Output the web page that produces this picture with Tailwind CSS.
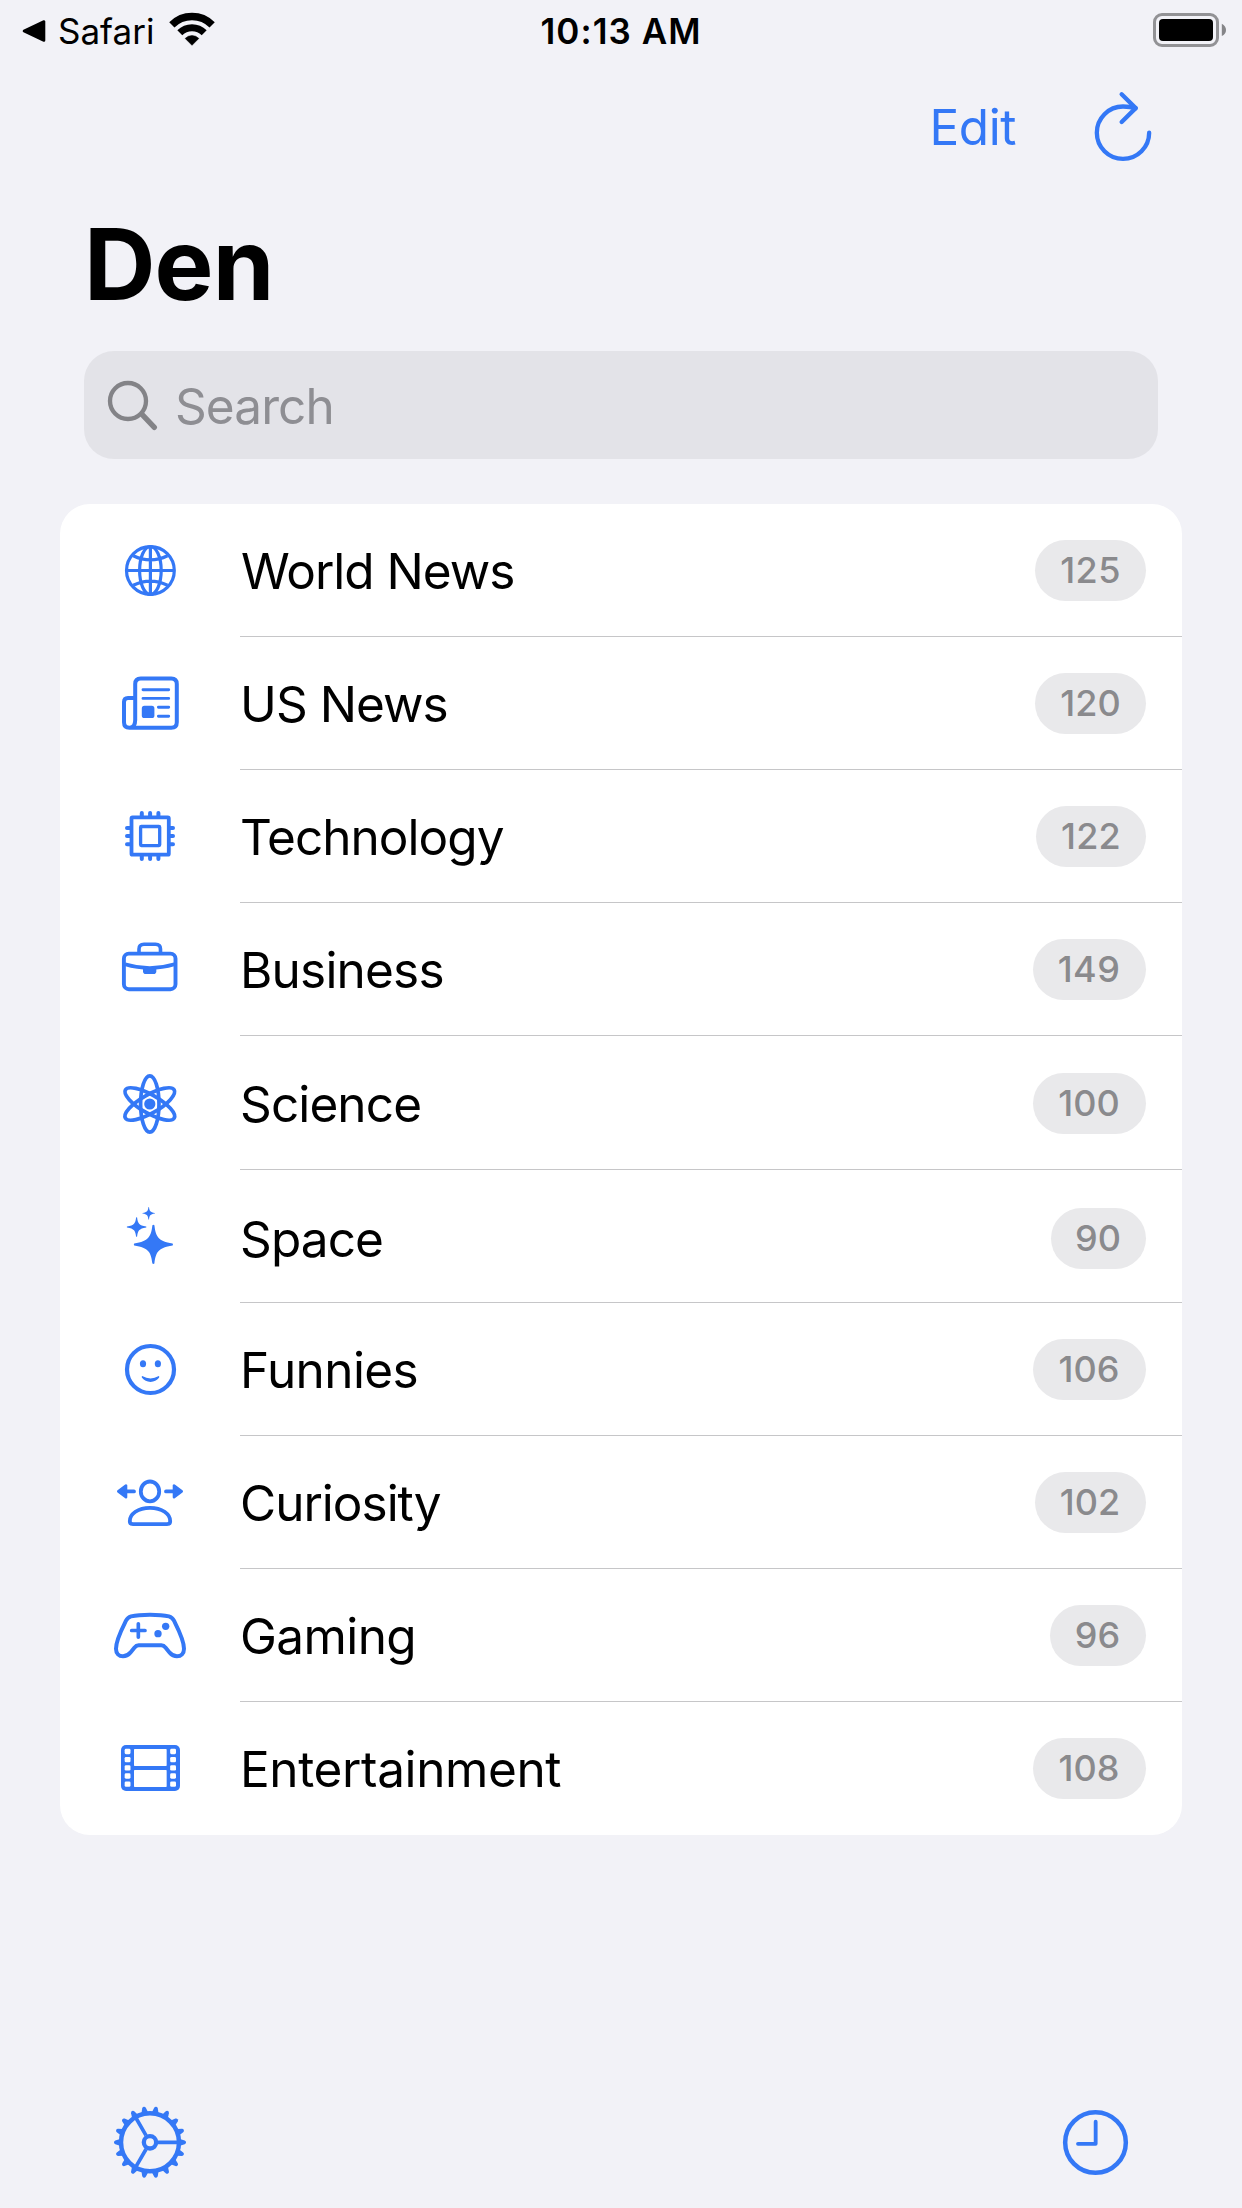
<!DOCTYPE html>
<html lang="en">
<head>
<meta charset="utf-8">
<title>Den</title>
<script src="https://cdn.jsdelivr.net/npm/@tailwindcss/browser@4"></script>
</head>
<body class="bg-[#f2f2f7]">
<div class="flex h-[2208px] w-[1242px] flex-col overflow-hidden bg-[#f2f2f7] font-['Inter',sans-serif] text-black">

  <!-- Status bar -->
  <header class="grid h-[62px] shrink-0 grid-cols-3 text-[35px] leading-[62px]">
    <div class="flex pl-[22px]">
      <svg class="h-[62px] w-6" viewBox="22 0 24 62"><path d="M24 31 L44 21.5 V40.5Z" fill="#000" stroke="#000" stroke-width="2.6" stroke-linejoin="round"/></svg>
      <span class="ml-3">Safari</span>
      <svg class="ml-[15px] h-[62px] w-[46px]" viewBox="169 0 46 62" fill="none" stroke="#000">
        <path d="M171.85 24.85 A28.5 28.5 0 0 1 212.15 24.85" stroke-width="7.4"/>
        <path d="M179.8 32.8 A17.3 17.3 0 0 1 204.2 32.8" stroke-width="7"/>
        <path d="M192 45.3 L185.2 38.4 A9.7 9.7 0 0 1 198.8 38.4Z" fill="#000" stroke-width=".6"/>
      </svg>
    </div>
    <div class="text-center font-semibold tracking-[1.03px]">10:13 AM</div>
    <div class="flex justify-end pr-[15px]">
      <svg class="h-[62px] w-[74px]" viewBox="1153 0 74 62">
        <rect x="1154.5" y="14.5" width="63" height="31" rx="7.5" fill="none" stroke="#929295" stroke-width="3"/>
        <rect x="1159" y="19" width="54" height="22" rx="4"/>
        <path d="M1221.8 23.7 Q1226 26 1226 30 Q1226 34 1221.8 36Z" fill="#858588"/>
      </svg>
    </div>
  </header>

  <!-- Navigation bar -->
  <nav class="flex h-[130px] shrink-0 justify-end pr-[82px] text-[49.5px] leading-[130px] tracking-[-0.45px] text-[#3478f6]">
    <span>Edit</span>
    <svg class="ml-[74px] h-[130px] w-[70px]" viewBox="1090 62 70 130">
      <g transform="translate(900 0) scale(.33333)" fill="none" stroke="currentColor" stroke-width="13" stroke-linecap="round" stroke-linejoin="round">
        <path d="M747.5 398 A78.5 78.5 0 1 1 669 319.5 C683 319.5 696 321 707 324.5"/>
        <path d="M665 283 L707 324.5 L665 366"/>
      </g>
    </svg>
  </nav>

  <h1 class="h-36 shrink-0 pl-[84px] text-[99px] font-bold leading-[144px] tracking-[-0.88px]">Den</h1>

  <!-- Search field -->
  <div class="mx-[84px] mt-[15px] flex h-[108px] shrink-0 rounded-[30px] bg-[#e3e3e8]">
    <svg class="h-[108px] w-[91px]" viewBox="84 351 91 108">
      <g transform="translate(60 200) scale(.33333)" fill="none" stroke="#838387" stroke-linecap="round">
        <circle cx="204" cy="603" r="54" stroke-width="13"/>
        <path d="M246 643 L283 682" stroke-width="16"/>
      </g>
    </svg>
    <span class="pt-px text-[49.5px] leading-[108px] tracking-[-0.9px] text-[#8e8e93]">Search</span>
  </div>

  <!-- Pages -->
  <ul class="mx-[60px] mt-[45px] flex shrink-0 flex-col rounded-[30px] bg-white text-[49.5px] leading-[132px]">
    <li class="flex h-[133px]">
      <svg class="h-[133px] w-[180px] text-[#3478f6]" viewBox="60 504 180 133" fill="none" stroke="currentColor" stroke-width="3.2">
        <circle cx="150.4" cy="570.5" r="23.9"/>
        <ellipse cx="150.4" cy="570.5" rx="10.8" ry="24"/>
        <path d="M150.4 546.5 V594.5 M126.4 570.5 H174.4 M133.3 555.7 Q150.4 564 167.5 555.7 M133.3 585.3 Q150.4 577 167.5 585.3"/>
      </svg>
      <div class="flex flex-1 border-b border-[#c6c6c8] pr-9 pt-px">
        <span class="pl-px tracking-[-1px]">World News</span>
        <span class="ml-auto mt-[35px] h-[61px] w-[111px] rounded-full bg-[#e9e9eb] text-center text-[36px] font-medium leading-[60px] tracking-[0.4px] text-[#8a8a8d]">125</span>
      </div>
    </li>
    <li class="flex h-[133px]">
      <svg class="h-[133px] w-[180px] text-[#3478f6]" viewBox="60 637 180 133" fill="none" stroke="currentColor" stroke-width="4" stroke-linecap="round">
        <path d="M135.2 720 V684 Q135.2 678.5 140.7 678.5 H171.3 Q176.8 678.5 176.8 684 V722.3 Q176.8 727.8 171.3 727.8 H129.5 Q124 727.8 124 722.3 V702 Q124 698 128 698 H135 M135.2 720 Q135.2 727.5 129.8 727.8"/>
        <path d="M143 689.7 H168.7 M143 698.4 H168.7 M158.4 707.3 H168.7 M158.4 716.3 H168.7" stroke-width="2.9"/>
        <rect x="141.8" y="705.8" width="12.6" height="12.3" rx="2.6" fill="currentColor" stroke="none"/>
      </svg>
      <div class="flex flex-1 border-b border-[#c6c6c8] pr-9 pt-px">
        <span class="tracking-[-0.95px]">US News</span>
        <span class="ml-auto mt-[35px] h-[61px] w-[111px] rounded-full bg-[#e9e9eb] text-center text-[36px] font-medium leading-[60px] tracking-[0px] text-[#8a8a8d]">120</span>
      </div>
    </li>
    <li class="flex h-[133px]">
      <svg class="h-[133px] w-[180px] text-[#3478f6]" viewBox="60 770 180 133" fill="none" stroke="currentColor" stroke-width="3.8" stroke-linecap="round">
        <rect x="131.5" y="817.4" width="37.3" height="37.3" rx="1"/>
        <rect x="140.6" y="826.5" width="19.1" height="19.1" rx=".8" stroke-width="3.3"/>
        <path d="M141.8 813 V816 M150.1 813 V816 M158.4 813 V816 M141.8 856 V859 M150.1 856 V859 M158.4 856 V859 M127 828 H130 M127 836.1 H130 M127 844.3 H130 M170 828 H173 M170 836.1 H173 M170 844.3 H173" stroke-width="4"/>
      </svg>
      <div class="flex flex-1 border-b border-[#c6c6c8] pr-9 pt-px">
        <span class="tracking-[-0.98px]">Technology</span>
        <span class="ml-auto mt-[35px] h-[61px] w-[110px] rounded-full bg-[#e9e9eb] text-center text-[36px] font-medium leading-[60px] tracking-[0.3px] text-[#8a8a8d]">122</span>
      </div>
    </li>
    <li class="flex h-[133px]">
      <svg class="h-[133px] w-[180px] text-[#3478f6]" viewBox="60 903 180 133" fill="none" stroke="currentColor" stroke-width="3.9">
        <rect x="123.9" y="953.6" width="51.6" height="35.6" rx="5"/>
        <path d="M139 953 V949 Q139 944.3 144 944.3 H155.5 Q160.5 944.3 160.500 949 V953" stroke-width="3.6"/>
        <path d="M125 964.3 Q149.7 971.8 174.5 964.3" stroke-width="3.6"/>
        <path d="M143 967.6 H156.3 V971.3 Q156.3 974.1 153.5 974.1 H145.8 Q143 974.1 143 971.3Z" fill="currentColor" stroke="none"/>
      </svg>
      <div class="flex flex-1 border-b border-[#c6c6c8] pr-9 pt-px">
        <span class="tracking-[-0.8px]">Business</span>
        <span class="ml-auto mt-[35px] h-[61px] w-[113px] rounded-full bg-[#e9e9eb] pr-px text-center text-[36px] font-medium leading-[60px] tracking-[0.4px] text-[#8a8a8d]">149</span>
      </div>
    </li>
    <li class="flex h-[134px]">
      <svg class="h-[134px] w-[180px] text-[#3478f6]" viewBox="60 1036 180 134" fill="none" stroke="currentColor" stroke-width="3.7">
        <ellipse cx="149.8" cy="1104" rx="9.2" ry="28.2"/>
        <ellipse cx="149.8" cy="1104" rx="9.2" ry="28.2" transform="rotate(60 149.8 1104)"/>
        <ellipse cx="149.8" cy="1104" rx="9.2" ry="28.2" transform="rotate(120 149.8 1104)"/>
        <circle cx="149.8" cy="1104" r="5.6" fill="currentColor" stroke="none"/>
      </svg>
      <div class="flex flex-1 border-b border-[#c6c6c8] pr-9 pt-0.5">
        <span class="tracking-[-0.88px]">Science</span>
        <span class="ml-auto mt-[35px] h-[61px] w-[113px] rounded-full bg-[#e9e9eb] pr-px text-center text-[36px] font-medium leading-[60px] tracking-[0px] text-[#8a8a8d]">100</span>
      </div>
    </li>
    <li class="flex h-[133px]">
      <svg class="h-[133px] w-[180px] text-[#3478f6]" viewBox="60 1170 180 133" fill="currentColor">
        <defs><path id="spark" d="M-1 -19.2 Q0 -20 1 -19.2 C2.4 -8 4.5 -3.2 19.2 -1 Q20 0 19.2 1 C4.5 3.2 2.4 8 1 19.2 Q0 20 -1 19.2 C-2.4 8 -4.5 3.2 -19.2 1 Q-20 0 -19.2 -1 C-4.5 -3.2 -2.4 -8 -1 -19.2Z"/></defs>
        <use href="#spark" transform="translate(153.4 1244.4)"/>
        <use href="#spark" transform="translate(136.6 1227) scale(.5)"/>
        <use href="#spark" transform="translate(148.7 1213.3) scale(.32)"/>
      </svg>
      <div class="flex flex-1 border-b border-[#c6c6c8] pr-9 pt-[3px]">
        <span class="tracking-[-0.88px]">Space</span>
        <span class="ml-auto mt-[35px] h-[61px] w-[95px] rounded-full bg-[#e9e9eb] pr-px text-center text-[36px] font-medium leading-[60px] tracking-[0px] text-[#8a8a8d]">90</span>
      </div>
    </li>
    <li class="flex h-[133px]">
      <svg class="h-[133px] w-[180px] text-[#3478f6]" viewBox="60 1303 180 133" fill="currentColor">
        <circle cx="150.5" cy="1369.5" r="23.5" fill="none" stroke="currentColor" stroke-width="4.2"/>
        <ellipse cx="143" cy="1363.8" rx="3.1" ry="3.5"/>
        <ellipse cx="157.9" cy="1363.8" rx="3.1" ry="3.5"/>
        <path d="M142.200 1376 Q150.500 1380.800 158.800 1376 Q159.800 1376.600 159 1377.800 Q155.800 1381.900 150.500 1381.900 T142 1377.800 Q141.200 1376.600 142.200 1376Z"/>
      </svg>
      <div class="flex flex-1 border-b border-[#c6c6c8] pr-9 pt-px">
        <span class="tracking-[-0.6px]">Funnies</span>
        <span class="ml-auto mt-[35px] h-[61px] w-[113px] rounded-full bg-[#e9e9eb] pr-px text-center text-[36px] font-medium leading-[60px] tracking-[0px] text-[#8a8a8d]">106</span>
      </div>
    </li>
    <li class="flex h-[133px]">
      <svg class="h-[133px] w-[180px] text-[#3478f6]" viewBox="60 1436 180 133" fill="none" stroke="currentColor" stroke-width="3.8" stroke-linecap="round" stroke-linejoin="round">
        <ellipse cx="150" cy="1491.4" rx="9.2" ry="9.9"/>
        <path d="M133 1524.2 H167 Q170.2 1524.2 170.2 1521.2 C170.2 1514 162 1507.8 150 1507.8 S129.8 1514 129.8 1521.2 Q129.8 1524.2 133 1524.2Z"/>
        <path d="M126 1491.4 H134 M166 1491.4 H174"/>
        <path d="M118.3 1491.4 L126 1485.6 V1497.2Z M181.7 1491.4 L174 1485.6 V1497.2Z" fill="currentColor" stroke-width="2.6"/>
      </svg>
      <div class="flex flex-1 border-b border-[#c6c6c8] pr-9 pt-px">
        <span class="tracking-[-1px]">Curiosity</span>
        <span class="ml-auto mt-[35px] h-[61px] w-[111px] rounded-full bg-[#e9e9eb] pr-px text-center text-[36px] font-medium leading-[60px] tracking-[0px] text-[#8a8a8d]">102</span>
      </div>
    </li>
    <li class="flex h-[133px]">
      <svg class="h-[133px] w-[180px] text-[#3478f6]" viewBox="60 1569 180 133">
        <g transform="translate(100 1580) scale(.33333)" fill="none" stroke="currentColor" stroke-width="12" stroke-linecap="round">
          <path d="M150 104 C172 104 190 105 207 109 C214 111 218 114 222 122 C236 150 252 180 252 206 C252 221 243 229 231 229 C222 229 216 226 209 218 L197 203 C193 198 190 196 184 196 H116 C110 196 107 198 103 203 L91 218 C84 226 78 229 69 229 C57 229 48 221 48 206 C48 180 64 150 78 122 C82 114 86 111 93 109 C110 105 128 104 150 104Z"/>
          <path d="M95 151.500 H135 M115 131.500 V171.500" stroke-width="11"/>
          <circle cx="197" cy="139" r="11" fill="currentColor" stroke="none"/>
          <circle cx="174" cy="161" r="11" fill="currentColor" stroke="none"/>
        </g>
      </svg>
      <div class="flex flex-1 border-b border-[#c6c6c8] pr-9 pt-px">
        <span class="tracking-[-0.6px]">Gaming</span>
        <span class="ml-auto mt-[35px] h-[61px] w-24 rounded-full bg-[#e9e9eb] pr-px text-center text-[36px] font-medium leading-[60px] tracking-[0px] text-[#8a8a8d]">96</span>
      </div>
    </li>
    <li class="flex h-[133px]">
      <svg class="h-[133px] w-[180px] text-[#3478f6]" viewBox="60 1702 180 133">
        <g transform="translate(100 1580) scale(.33333)" fill="#fff">
          <rect x="63" y="495" width="177" height="138" rx="15" fill="#3478f6"/>
          <rect x="102" y="507" width="98" height="51" rx="2"/><rect x="102" y="570" width="98" height="51" rx="2"/>
          <rect x="74" y="506.500" width="17.500" height="16" rx="4"/><rect x="74" y="531" width="17.500" height="16" rx="4"/><rect x="74" y="555.500" width="17.500" height="16" rx="4"/><rect x="74" y="580" width="17.500" height="16" rx="4"/><rect x="74" y="604.500" width="17.500" height="16" rx="4"/>
          <rect x="210.500" y="506.500" width="17.500" height="16" rx="4"/><rect x="210.500" y="531" width="17.500" height="16" rx="4"/><rect x="210.500" y="555.500" width="17.500" height="16" rx="4"/><rect x="210.500" y="580" width="17.500" height="16" rx="4"/><rect x="210.500" y="604.500" width="17.500" height="16" rx="4"/>
        </g>
      </svg>
      <div class="flex flex-1 pr-9 pt-px">
        <span class="tracking-[-0.38px]">Entertainment</span>
        <span class="ml-auto mt-[35px] h-[61px] w-[113px] rounded-full bg-[#e9e9eb] pr-px text-center text-[36px] font-medium leading-[60px] tracking-[0px] text-[#8a8a8d]">108</span>
      </div>
    </li>
  </ul>

  <!-- Bottom toolbar -->
  <footer class="mt-auto flex h-[132px] shrink-0 justify-between pl-[110px] pr-[107px] text-[#3478f6]">
    <svg class="h-[132px] w-20" viewBox="110 2076 80 132">
      <defs><path id="tooth" d="M90 -10 L104 -5.500 Q108 -4 108 0 Q108 4 104 5.500 L90 10Z"/></defs>
      <g transform="translate(150 2142.300) scale(.33333)" fill="currentColor">
        <g fill="none" stroke="currentColor">
          <circle r="87" stroke-width="13.500"/>
          <circle r="18.500" stroke-width="13"/>
          <path d="M24 0 H85 M-12 -20.800 L-42.500 -73.600 M-12 20.800 L-42.500 73.600" stroke-width="11"/>
        </g>
        <use href="#tooth"/><use href="#tooth" transform="rotate(20)"/><use href="#tooth" transform="rotate(40)"/><use href="#tooth" transform="rotate(60)"/><use href="#tooth" transform="rotate(80)"/><use href="#tooth" transform="rotate(100)"/><use href="#tooth" transform="rotate(120)"/><use href="#tooth" transform="rotate(140)"/><use href="#tooth" transform="rotate(160)"/><use href="#tooth" transform="rotate(180)"/><use href="#tooth" transform="rotate(200)"/><use href="#tooth" transform="rotate(220)"/><use href="#tooth" transform="rotate(240)"/><use href="#tooth" transform="rotate(260)"/><use href="#tooth" transform="rotate(280)"/><use href="#tooth" transform="rotate(300)"/><use href="#tooth" transform="rotate(320)"/><use href="#tooth" transform="rotate(340)"/>
      </g>
    </svg>
    <svg class="h-[132px] w-20" viewBox="1055 2076 80 132">
      <g transform="translate(1040 2090) scale(.33333)" fill="none" stroke="currentColor" stroke-linecap="round" stroke-linejoin="round">
        <circle cx="166.500" cy="157.500" r="91" stroke-width="13.500"/>
        <path d="M167 95 V161.500 H114" stroke-width="11.500"/>
      </g>
    </svg>
  </footer>
</div>
</body>
</html>
